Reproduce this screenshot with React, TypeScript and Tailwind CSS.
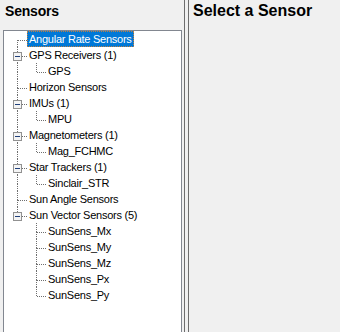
import React from "react";

interface Node {
    label: string
    selected?: boolean
    children?: string[]
}

const nodes: Node[] = [
    { label: "Angular Rate Sensors", selected: true },
    { label: "GPS Receivers (1)", children: ["GPS"] },
    { label: "Horizon Sensors" },
    { label: "IMUs (1)", children: ["MPU"] },
    { label: "Magnetometers (1)", children: ["Mag_FCHMC"] },
    { label: "Star Trackers (1)", children: ["Sinclair_STR"] },
    { label: "Sun Angle Sensors" },
    { label: "Sun Vector Sensors (5)", children: ["SunSens_Mx", "SunSens_My", "SunSens_Mz", "SunSens_Px", "SunSens_Py"] },
];

const DOT = "#6f6f6f";

// one 19x16 indent cell of the tree: dotted lines and maybe the +/- box
const Cell = ({ up, down, branch, box }: { up?: boolean; down?: boolean; branch?: boolean; box?: boolean }) => (
    <svg width="19" height="16" className="shrink-0" shapeRendering="crispEdges">
        {up && <line x1="9.5" y1="0" x2="9.5" y2="9" stroke={DOT} strokeDasharray="1 1" />}
        {down && <line x1="9.5" y1="9" x2="9.5" y2="16" stroke={DOT} strokeDasharray="1 1" />}
        {branch && <line x1="10" y1="9.5" x2="19" y2="9.5" stroke={DOT} strokeDasharray="1 1" />}
        {box && (
            <g>
                <rect x="5.5" y="5.5" width="8" height="8" fill="#f4f4f4" stroke="#919191" />
                <line x1="7" y1="9.5" x2="12" y2="9.5" stroke="#1f3f7a" />
            </g>
        )}
    </svg>
);

const Label = ({ text, selected }: { text: string; selected?: boolean }) => (
    <span
        className={
            selected
                ? "h-4 px-[2px] leading-4 whitespace-nowrap bg-[#0078d7] text-white outline-1 outline-dotted outline-[#c08040] -outline-offset-1"
                : "h-4 px-[2px] leading-4 whitespace-nowrap text-black"
        }
    >
        {text}
    </span>
);

const SensorTree = () => {
    const rows: React.ReactNode[] = [];
    nodes.forEach((n, i) => {
        const first = i === 0;
        const last = i === nodes.length - 1;
        rows.push(
            <div key={n.label} className="flex h-4 items-start">
                <Cell up={!first} down={!last} branch box={!!n.children} />
                <Label text={n.label} selected={n.selected} />
            </div>
        );
        n.children?.forEach((c, j) => {
            const lastChild = j === n.children!.length - 1;
            rows.push(
                <div key={c} className="flex h-4 items-start">
                    <Cell up={!last} down={!last} />
                    <Cell up down={!lastChild} branch />
                    <Label text={c} />
                </div>
            );
        });
    });
    return (
        <div className="ml-[3px] w-[179px] h-[320px] border border-[#828790] bg-white pl-[4px] text-[11px] tracking-[-0.25px]">
            {rows}
        </div>
    );
};

export default function App() {
    return (
        <div className="w-[340px] h-[332px] overflow-hidden flex bg-[#f0f0f0] font-['Liberation_Sans',Arial,sans-serif]">
            <div className="w-[185px] shrink-0 border-r border-[#6d6d6d]">
                <div className="h-[30px] pl-[5px] pt-[3px] text-[14px] leading-4 font-bold tracking-[-0.2px] text-black">Sensors</div>
                <SensorTree />
            </div>
            <div className="w-[3px] shrink-0" />
            <div className="flex-1 border-l border-[#6d6d6d] pl-[4px] pt-[2px]">
                <div className="text-[16px] leading-[18px] font-bold text-black">Select a Sensor</div>
            </div>
        </div>
    );
}
